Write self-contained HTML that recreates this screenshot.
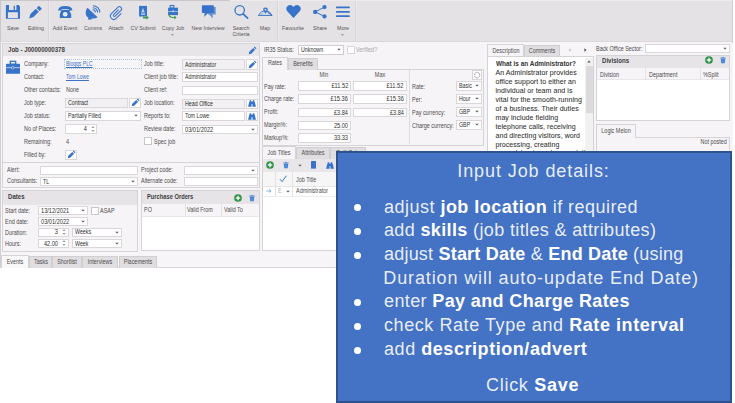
<!DOCTYPE html><html><head><meta charset="utf-8"><style>
html,body{margin:0;padding:0;width:735px;height:403px;overflow:hidden;background:#ffffff;font-family:"Liberation Sans",sans-serif;}
.a{position:absolute;}
.t{position:absolute;white-space:nowrap;line-height:10px;height:10px;}
.dd{width:0;height:0;border-left:1.6px solid transparent;border-right:1.6px solid transparent;border-top:1.6px solid #5a5a5a;}
.su{width:0;height:0;border-left:1.4px solid transparent;border-right:1.4px solid transparent;border-bottom:1.4px solid #6a6a6a;}
.sd{width:0;height:0;border-left:1.4px solid transparent;border-right:1.4px solid transparent;border-top:1.4px solid #6a6a6a;}
u{text-decoration:underline;}
.co b{color:#fff;}
</style></head><body>
<div class="a" style="left:0px;top:0px;width:733px;height:41px;background:#e4e2e5;"></div>
<div class="a" style="left:0px;top:0px;width:230px;height:1px;background:#cac8ca;"></div>
<div class="a" style="left:230px;top:0px;width:503px;height:1px;background:#eceaec;"></div>
<div class="a" style="left:0px;top:0px;width:1px;height:41px;background:#c9c7c9;"></div>
<div class="a" style="left:732px;top:0px;width:1px;height:41px;background:#cfcdcf;"></div>
<div class="a" style="left:0px;top:41px;width:733px;height:1px;background:#dad7db;"></div>
<div class="a" style="left:48px;top:1px;width:1px;height:40px;background:#d6d4d7;"></div>
<div class="a" style="left:49px;top:1px;width:1px;height:40px;background:#eceaed;"></div>
<div class="a" style="left:277px;top:1px;width:1px;height:40px;background:#d6d4d7;"></div>
<div class="a" style="left:278px;top:1px;width:1px;height:40px;background:#eceaed;"></div>
<div class="a" style="left:355px;top:1px;width:1px;height:40px;background:#d6d4d7;"></div>
<div class="a" style="left:356px;top:1px;width:1px;height:40px;background:#eceaed;"></div>
<svg class="a" style="left:0px;top:0px" width="48" height="24" viewBox="0 0 48 24"><path d="M5.9 5 H18.6 L20 6.4 V18.8 H5.9 Z M7.9 12.2 V17.9 H17.9 V12.2 Z" fill="#3773c8" fill-rule="evenodd"/><rect x="9" y="5" width="7.4" height="5" fill="#e4e2e5"/><rect x="13.6" y="5.8" width="1.3" height="4" fill="#3773c8"/><path d="M29.2 18.4 L30.5 14.1 L35.8 8.8 L38.8 11.8 L33.5 17.1 Z" fill="#3773c8"/><path d="M36.7 7.9 L38.9 5.7 L41.9 8.7 L39.7 10.9 Z" fill="#3773c8"/></svg>
<svg class="a" style="left:54px;top:2px" width="22" height="20" viewBox="0 0 22 20"><path d="M4.2 7.9 Q4.5 4 11.2 4 Q17.9 4 18.4 7.9 L18.2 8.4 L15.1 8.4 L14.7 6.9 L7.7 6.9 L7.3 8.4 L4.4 8.4 Z" fill="#3773c8"/><path d="M7.6 7.6 H14.8 L17.2 12.6 V15.9 H5.8 V12.6 Z" fill="#3773c8"/><rect x="8" y="7.3" width="6.4" height="0.6" fill="#e4e2e5"/><circle cx="11.2" cy="12.3" r="2.3" fill="#eef1f8"/><circle cx="11.2" cy="12.3" r="0.5" fill="#9db8e3"/></svg>
<svg class="a" style="left:82px;top:2px" width="22" height="20" viewBox="0 0 22 20"><path d="M5.5 5.8 L15.6 15.3 Q13 17 9.6 16.3 L10 17.6 H5.9 L6.4 15.7 Q3.6 14.2 3.7 10.5 Q3.9 7.5 5.5 5.8 Z" fill="#3773c8"/><g transform="translate(0 0.8)"><path d="M10.6 7 A2.8 2.8 0 0 1 13.4 9.8" stroke="#3773c8" stroke-width="1.1" fill="none"/><path d="M10.8 4.9 A4.8 4.8 0 0 1 15.6 9.7" stroke="#3773c8" stroke-width="1.1" fill="none"/><path d="M11 2.9 A6.8 6.8 0 0 1 17.8 9.7" stroke="#3773c8" stroke-width="1.1" fill="none"/></g></svg>
<svg class="a" style="left:106px;top:2px" width="20" height="20" viewBox="0 0 20 20"><g transform="translate(10.3 11.6) scale(0.82) rotate(45) translate(-10.5 -11.5)"><path d="M9.2 6.5 V14.6 A1.3 1.3 0 0 0 11.8 14.6 V4.8 A2.7 2.7 0 0 0 6.4 4.8 V15.8 A4.1 4.1 0 0 0 14.6 15.8 V7.5" stroke="#3773c8" stroke-width="1.25" fill="none" stroke-linecap="round"/></g></svg>
<svg class="a" style="left:132px;top:2px" width="22" height="20" viewBox="0 0 22 20"><rect x="7.1" y="3.9" width="7.9" height="10.6" fill="#3773c8"/><path d="M11 5.8 L9.3 10.2 H12.7 Z" fill="#bcd3f0"/><rect x="9" y="10.8" width="4" height="0.8" fill="#bcd3f0"/><rect x="9" y="12.2" width="4" height="0.8" fill="#bcd3f0"/><path d="M11 14.8 H14.5 V13.4 L16.8 15.6 L14.5 17.8 V16.4 H11 Z" fill="#3a9a4a"/></svg>
<svg class="a" style="left:164px;top:2px" width="18" height="20" viewBox="0 0 18 20"><rect x="6.2" y="3.5" width="3.6" height="2.6" fill="none" stroke="#3773c8" stroke-width="1.1"/><rect x="4.1" y="5.7" width="9.9" height="7.4" fill="#3773c8"/><rect x="4.1" y="9" width="9.9" height="0.7" fill="#bcd3f0"/><circle cx="9" cy="9.3" r="1" fill="#bcd3f0"/><path d="M5.3 11.5 Q5.5 14.8 9 14.9 H10.3 V13.6 L12.6 15.5 L10.3 17.4 V16.1 H9 Q4.3 16 4.2 11.5 Z" fill="#3a9a4a"/></svg>
<svg class="a" style="left:196px;top:2px" width="22" height="20" viewBox="0 0 22 20"><path d="M16 5.1 H19.7 V12.6 H16.6 L16.8 16.6 L13.2 12.6 H12 V11 H16 Z" fill="#3773c8" opacity="0.72"/><path d="M6.3 3.2 H17.4 Q17.8 3.2 17.8 3.6 V10.6 Q17.8 11 17.4 11 H12.2 L7.9 15 L8.8 11 H6.3 Q5.9 11 5.9 10.6 V3.6 Q5.9 3.2 6.3 3.2 Z" fill="#3773c8"/></svg>
<svg class="a" style="left:230px;top:2px" width="22" height="20" viewBox="0 0 22 20"><circle cx="9.7" cy="8.3" r="4.7" stroke="#3773c8" stroke-width="1.3" fill="none"/><path d="M13.1 11.8 L17.6 16.2" stroke="#3773c8" stroke-width="1.7" stroke-linecap="round"/></svg>
<svg class="a" style="left:254px;top:2px" width="22" height="20" viewBox="0 0 22 20"><path d="M4.3 13.4 L7.6 9.6 H9.8 M13.2 9.6 H15.1 L18.1 13.4 Z" stroke="#3773c8" stroke-width="0.9" fill="none" stroke-linejoin="round"/><path d="M4.3 13.4 H18.1" stroke="#3773c8" stroke-width="1"/><path d="M6.5 11.8 L9.5 11.8 M13.5 11.2 L16.5 12.2" stroke="#3773c8" stroke-width="0.6" opacity="0.6"/><path d="M11.5 12 L9.3 8.3 Q8.7 5.4 11.5 5.4 Q14.3 5.4 13.7 8.3 Z" fill="#3773c8"/><circle cx="11.5" cy="7.7" r="0.9" fill="#e4e2e5"/></svg>
<svg class="a" style="left:286px;top:5px" width="15" height="13" viewBox="0 0 15 13"><path d="M7.5 13 L1.5 6.5 Q-0.5 4 0.8 2 Q2 0 4 0 Q6.3 0 7.5 2 Q8.7 0 11 0 Q13 0 14.2 2 Q15.5 4 13.5 6.5 Z" fill="#3773c8"/></svg>
<svg class="a" style="left:306px;top:2px" width="22" height="20" viewBox="0 0 22 20"><circle cx="18.5" cy="5.1" r="2.1" fill="#3773c8"/><circle cx="9.2" cy="9.9" r="2.2" fill="#3773c8"/><circle cx="18.5" cy="14.4" r="2.1" fill="#3773c8"/><path d="M18.5 5.1 L9.2 9.9 L18.5 14.4" stroke="#3773c8" stroke-width="1" fill="none"/></svg>
<svg class="a" style="left:335px;top:2px" width="16" height="20" viewBox="0 0 16 20"><rect x="0.9" y="4.45" width="14" height="1.9" rx="0.95" fill="#3773c8"/><rect x="0.9" y="8.95" width="14" height="1.9" rx="0.95" fill="#3773c8"/><rect x="0.9" y="13.2" width="14" height="1.9" rx="0.95" fill="#3773c8"/></svg>
<div class="t" style="top:22.9px;font-size:6px;color:#545254;letter-spacing:0px;transform:scaleX(0.88);transform-origin:center center;left:-87.5px;width:200px;text-align:center;">Save</div>
<div class="t" style="top:22.9px;font-size:6px;color:#545254;letter-spacing:0px;transform:scaleX(0.88);transform-origin:center center;left:-64.5px;width:200px;text-align:center;">Editing</div>
<div class="t" style="top:22.9px;font-size:6px;color:#545254;letter-spacing:0px;transform:scaleX(0.88);transform-origin:center center;left:-35px;width:200px;text-align:center;">Add Event</div>
<div class="t" style="top:22.9px;font-size:6px;color:#545254;letter-spacing:0px;transform:scaleX(0.88);transform-origin:center center;left:-7.299999999999997px;width:200px;text-align:center;">Comms</div>
<div class="t" style="top:22.9px;font-size:6px;color:#545254;letter-spacing:0px;transform:scaleX(0.88);transform-origin:center center;left:16px;width:200px;text-align:center;">Attach</div>
<div class="t" style="top:22.9px;font-size:6px;color:#545254;letter-spacing:0px;transform:scaleX(0.88);transform-origin:center center;left:43px;width:200px;text-align:center;">CV Submit</div>
<div class="t" style="top:22.9px;font-size:6px;color:#545254;letter-spacing:0px;transform:scaleX(0.88);transform-origin:center center;left:72.69999999999999px;width:200px;text-align:center;">Copy Job</div>
<div class="t" style="top:22.9px;font-size:6px;color:#545254;letter-spacing:0px;transform:scaleX(0.88);transform-origin:center center;left:108.4px;width:200px;text-align:center;">New Interview</div>
<div class="t" style="top:22.9px;font-size:6px;color:#545254;letter-spacing:0px;transform:scaleX(0.88);transform-origin:center center;left:141px;width:200px;text-align:center;">Search</div>
<div class="t" style="top:22.9px;font-size:6px;color:#545254;letter-spacing:0px;transform:scaleX(0.88);transform-origin:center center;left:164.8px;width:200px;text-align:center;">Map</div>
<div class="t" style="top:22.9px;font-size:6px;color:#545254;letter-spacing:0px;transform:scaleX(0.88);transform-origin:center center;left:193.3px;width:200px;text-align:center;">Favourite</div>
<div class="t" style="top:22.9px;font-size:6px;color:#545254;letter-spacing:0px;transform:scaleX(0.88);transform-origin:center center;left:219.7px;width:200px;text-align:center;">Share</div>
<div class="t" style="top:22.9px;font-size:6px;color:#545254;letter-spacing:0px;transform:scaleX(0.88);transform-origin:center center;left:242.60000000000002px;width:200px;text-align:center;">More</div>
<div class="t" style="top:29.299999999999997px;font-size:6px;color:#545254;letter-spacing:0px;transform:scaleX(0.88);transform-origin:center center;left:141px;width:200px;text-align:center;">Criteria</div>
<svg class="a" style="left:171.2px;top:33.5px" width="3" height="2" viewBox="0 0 3 2"><path d="M0 0.2 H3 L1.5 1.8 Z" fill="#888"/></svg>
<svg class="a" style="left:341.1px;top:33.5px" width="3" height="2" viewBox="0 0 3 2"><path d="M0 0.2 H3 L1.5 1.8 Z" fill="#888"/></svg>
<div class="a" style="left:0px;top:42px;width:733px;height:226px;background:#f7f5f7;"></div>
<div class="a" style="left:0px;top:42px;width:1px;height:226px;background:#d0ced0;"></div>
<div class="a" style="left:732px;top:42px;width:1px;height:226px;background:#d0ced0;"></div>
<div class="a" style="left:0px;top:267px;width:733px;height:1px;background:#d8d6d8;"></div>
<div class="a" style="left:2px;top:43px;width:258px;height:120px;background:#f6f4f6;border:1px solid #d5d3d5;box-sizing:border-box;"></div>
<div class="a" style="left:3px;top:44px;width:256px;height:12px;background:#e7e5e7;"></div>
<div class="t" style="top:45px;font-size:7px;color:#3d3d3d;letter-spacing:0px;transform:scaleX(0.87);transform-origin:left center;font-weight:bold;left:8px;">Job - J00000000378</div>
<svg class="a" style="left:247.5px;top:45.5px" width="9" height="9" viewBox="0 0 16 16"><path d="M1.2 14.8 L2.3 10.4 L9.3 3.4 L12.6 6.7 L5.6 13.7 Z" fill="#3773c8"/><path d="M10.4 2.3 L11.8 0.9 L15.1 4.2 L13.7 5.6 Z" fill="#3773c8"/></svg>
<svg class="a" style="left:6px;top:60px" width="14" height="14" viewBox="0 0 14 14"><rect x="4.3" y="1.3" width="5.4" height="3" fill="none" stroke="#3773c8" stroke-width="1.3"/><rect x="0" y="3.8" width="14" height="10" rx="0.5" fill="#3773c8"/><rect x="0" y="7.3" width="14" height="0.8" fill="#cfdcf2"/><circle cx="6.7" cy="7.7" r="1.3" fill="#3773c8" stroke="#cfdcf2" stroke-width="0.7"/></svg>
<div class="t" style="top:59px;font-size:6.8px;color:#4e4c4e;letter-spacing:0px;transform:scaleX(0.8);transform-origin:left center;left:24px;">Company:</div>
<div class="t" style="top:72px;font-size:6.8px;color:#4e4c4e;letter-spacing:0px;transform:scaleX(0.8);transform-origin:left center;left:24px;">Contact:</div>
<div class="t" style="top:85px;font-size:6.8px;color:#4e4c4e;letter-spacing:0px;transform:scaleX(0.8);transform-origin:left center;left:24px;">Other contacts:</div>
<div class="t" style="top:98px;font-size:6.8px;color:#4e4c4e;letter-spacing:0px;transform:scaleX(0.8);transform-origin:left center;left:24px;">Job type:</div>
<div class="t" style="top:110.5px;font-size:6.8px;color:#4e4c4e;letter-spacing:0px;transform:scaleX(0.8);transform-origin:left center;left:24px;">Job status:</div>
<div class="t" style="top:124px;font-size:6.8px;color:#4e4c4e;letter-spacing:0px;transform:scaleX(0.8);transform-origin:left center;left:24px;">No of Places:</div>
<div class="t" style="top:137px;font-size:6.8px;color:#4e4c4e;letter-spacing:0px;transform:scaleX(0.8);transform-origin:left center;left:24px;">Remaining:</div>
<div class="t" style="top:150px;font-size:6.8px;color:#4e4c4e;letter-spacing:0px;transform:scaleX(0.8);transform-origin:left center;left:24px;">Filled by:</div>
<div class="a" style="left:64px;top:59px;width:78px;height:10px;background:#f7f6f7;border:1px dotted #a9c1e3;box-sizing:border-box;"></div>
<div class="t" style="top:59px;font-size:6.8px;color:#3f6fc4;letter-spacing:0px;transform:scaleX(0.74);transform-origin:left center;left:66px;"><u>Bloggs PLC</u></div>
<div class="t" style="top:72px;font-size:6.8px;color:#3f6fc4;letter-spacing:0px;transform:scaleX(0.74);transform-origin:left center;left:66px;"><u>Tom Lowe</u></div>
<div class="t" style="top:85px;font-size:6.8px;color:#4e4c4e;letter-spacing:0px;transform:scaleX(0.8);transform-origin:left center;left:65.5px;">None</div>
<div class="a" style="left:65px;top:98px;width:63px;height:10px;background:#f2f0f2;border:1px solid #d9d7d9;box-sizing:border-box;"></div>
<div class="t" style="top:98.4px;font-size:6.8px;color:#303030;letter-spacing:0px;transform:scaleX(0.78);transform-origin:left center;left:68px;">Contract</div>
<div class="a" style="left:129px;top:98px;width:12px;height:10px;background:#ffffff;border:1px solid #d9d7d9;box-sizing:border-box;"></div>
<svg class="a" style="left:130.5px;top:98.4px" width="9" height="9" viewBox="0 0 16 16"><path d="M1.2 14.8 L2.3 10.4 L9.3 3.4 L12.6 6.7 L5.6 13.7 Z" fill="#3773c8"/><path d="M10.4 2.3 L11.8 0.9 L15.1 4.2 L13.7 5.6 Z" fill="#3773c8"/></svg>
<div class="a" style="left:65px;top:110.5px;width:76px;height:10px;background:#ffffff;border:1px solid #d9d7d9;box-sizing:border-box;"></div>
<div class="t" style="top:110.9px;font-size:6.8px;color:#303030;letter-spacing:0px;transform:scaleX(0.78);transform-origin:left center;left:68px;">Partially Filled</div>
<svg class="a" style="left:134px;top:114.0px" width="4" height="3" viewBox="0 0 4 3"><path d="M0.3 0.8 H3.7 L2 2.6 Z" fill="#555"/></svg>
<div class="a" style="left:65px;top:124px;width:32px;height:10px;background:#ffffff;border:1px solid #d9d7d9;box-sizing:border-box;"></div>
<div class="t" style="top:124.4px;font-size:6.8px;color:#303030;letter-spacing:0px;transform:scaleX(0.83);transform-origin:right center;right:648.5px;text-align:right;">4</div>
<svg class="a" style="left:90.5px;top:125.0px" width="4" height="8" viewBox="0 0 4 8"><path d="M0.8 3 L2 1.7 L3.2 3 M0.8 5 L2 6.3 L3.2 5" stroke="#666" stroke-width="0.8" fill="none"/></svg>
<div class="t" style="top:137px;font-size:6.8px;color:#4e4c4e;letter-spacing:0px;transform:scaleX(0.8);transform-origin:left center;left:65.5px;">4</div>
<div class="a" style="left:65px;top:149.5px;width:12px;height:10px;background:#ffffff;border:1px solid #d9d7d9;box-sizing:border-box;"></div>
<svg class="a" style="left:66.5px;top:149.9px" width="9" height="9" viewBox="0 0 16 16"><path d="M1.2 14.8 L2.3 10.4 L9.3 3.4 L12.6 6.7 L5.6 13.7 Z" fill="#3773c8"/><path d="M10.4 2.3 L11.8 0.9 L15.1 4.2 L13.7 5.6 Z" fill="#3773c8"/></svg>
<div class="t" style="top:59px;font-size:6.8px;color:#4e4c4e;letter-spacing:0px;transform:scaleX(0.8);transform-origin:left center;left:144px;">Job title:</div>
<div class="t" style="top:72px;font-size:6.8px;color:#4e4c4e;letter-spacing:0px;transform:scaleX(0.8);transform-origin:left center;left:144px;">Client job title:</div>
<div class="t" style="top:85px;font-size:6.8px;color:#4e4c4e;letter-spacing:0px;transform:scaleX(0.8);transform-origin:left center;left:144px;">Client ref:</div>
<div class="t" style="top:98px;font-size:6.8px;color:#4e4c4e;letter-spacing:0px;transform:scaleX(0.8);transform-origin:left center;left:144px;">Job location:</div>
<div class="t" style="top:111px;font-size:6.8px;color:#4e4c4e;letter-spacing:0px;transform:scaleX(0.8);transform-origin:left center;left:144px;">Reports to:</div>
<div class="t" style="top:124px;font-size:6.8px;color:#4e4c4e;letter-spacing:0px;transform:scaleX(0.8);transform-origin:left center;left:144px;">Review date:</div>
<div class="a" style="left:182px;top:59px;width:63px;height:10.5px;background:#f2f0f2;border:1px solid #d9d7d9;box-sizing:border-box;"></div>
<div class="t" style="top:59.650000000000006px;font-size:6.8px;color:#303030;letter-spacing:0px;transform:scaleX(0.78);transform-origin:left center;left:185px;">Administrator</div>
<div class="a" style="left:246px;top:59px;width:12px;height:10.5px;background:#ffffff;border:1px solid #d9d7d9;box-sizing:border-box;"></div>
<svg class="a" style="left:247.5px;top:59.65px" width="9" height="9" viewBox="0 0 16 16"><path d="M1.2 14.8 L2.3 10.4 L9.3 3.4 L12.6 6.7 L5.6 13.7 Z" fill="#3773c8"/><path d="M10.4 2.3 L11.8 0.9 L15.1 4.2 L13.7 5.6 Z" fill="#3773c8"/></svg>
<div class="a" style="left:182px;top:72px;width:76px;height:10px;background:#ffffff;border:1px solid #d9d7d9;box-sizing:border-box;"></div>
<div class="t" style="top:72.4px;font-size:6.8px;color:#303030;letter-spacing:0px;transform:scaleX(0.78);transform-origin:left center;left:185px;">Administrator</div>
<div class="a" style="left:182px;top:85.5px;width:76px;height:9.5px;background:#ffffff;border:1px solid #d9d7d9;box-sizing:border-box;"></div>
<div class="a" style="left:182px;top:98.5px;width:63px;height:10px;background:#f2f0f2;border:1px solid #d9d7d9;box-sizing:border-box;"></div>
<div class="t" style="top:98.9px;font-size:6.8px;color:#303030;letter-spacing:0px;transform:scaleX(0.78);transform-origin:left center;left:185px;">Head Office</div>
<div class="a" style="left:246px;top:98.5px;width:12px;height:10px;background:#ffffff;border:1px solid #d9d7d9;box-sizing:border-box;"></div>
<svg class="a" style="left:248.0px;top:100.0px" width="8" height="7" viewBox="0 0 8 7"><path d="M1.6 0.2 H3.2 V1.6 H4.8 V0.2 H6.4 V1.8 L6.9 2.2 L7.9 6.8 H4.5 L4.4 4 H3.6 L3.5 6.8 H0.1 L1.1 2.2 L1.6 1.8 Z" fill="#3773c8"/></svg>
<div class="a" style="left:182px;top:111px;width:63px;height:10px;background:#ffffff;border:1px solid #d9d7d9;box-sizing:border-box;"></div>
<div class="t" style="top:111.4px;font-size:6.8px;color:#303030;letter-spacing:0px;transform:scaleX(0.78);transform-origin:left center;left:185px;">Tom Lowe</div>
<div class="a" style="left:246px;top:111px;width:12px;height:10px;background:#ffffff;border:1px solid #d9d7d9;box-sizing:border-box;"></div>
<svg class="a" style="left:248.0px;top:112.5px" width="8" height="7" viewBox="0 0 8 7"><path d="M1.6 0.2 H3.2 V1.6 H4.8 V0.2 H6.4 V1.8 L6.9 2.2 L7.9 6.8 H4.5 L4.4 4 H3.6 L3.5 6.8 H0.1 L1.1 2.2 L1.6 1.8 Z" fill="#3773c8"/></svg>
<div class="a" style="left:182px;top:124.5px;width:76px;height:9.5px;background:#ffffff;border:1px solid #d9d7d9;box-sizing:border-box;"></div>
<div class="t" style="top:124.65px;font-size:6.8px;color:#303030;letter-spacing:0px;transform:scaleX(0.83);transform-origin:left center;left:185px;">03/01/2022</div>
<svg class="a" style="left:251px;top:127.75px" width="4" height="3" viewBox="0 0 4 3"><path d="M0.3 0.8 H3.7 L2 2.6 Z" fill="#555"/></svg>
<div class="a" style="left:144px;top:137px;width:8px;height:8px;background:#ffffff;border:1px solid #c9c7c9;box-sizing:border-box;"></div>
<div class="t" style="top:136.5px;font-size:6.8px;color:#4e4c4e;letter-spacing:0px;transform:scaleX(0.8);transform-origin:left center;left:154px;">Spec job</div>
<div class="a" style="left:2px;top:162px;width:258px;height:26px;background:#f6f4f6;border:1px solid #d5d3d5;box-sizing:border-box;"></div>
<div class="t" style="top:165px;font-size:6.8px;color:#4e4c4e;letter-spacing:0px;transform:scaleX(0.8);transform-origin:left center;left:6.5px;">Alert:</div>
<div class="t" style="top:176px;font-size:6.8px;color:#4e4c4e;letter-spacing:0px;transform:scaleX(0.8);transform-origin:left center;left:6.5px;">Consultants:</div>
<div class="a" style="left:40px;top:165.5px;width:98px;height:9.5px;background:#ffffff;border:1px solid #d9d7d9;box-sizing:border-box;"></div>
<div class="a" style="left:40px;top:176.5px;width:98px;height:9.5px;background:#ffffff;border:1px solid #d9d7d9;box-sizing:border-box;"></div>
<div class="t" style="top:176.65px;font-size:6.8px;color:#303030;letter-spacing:0px;transform:scaleX(0.78);transform-origin:left center;left:43px;">TL</div>
<svg class="a" style="left:131px;top:179.75px" width="4" height="3" viewBox="0 0 4 3"><path d="M0.3 0.8 H3.7 L2 2.6 Z" fill="#555"/></svg>
<div class="t" style="top:165px;font-size:6.8px;color:#4e4c4e;letter-spacing:0px;transform:scaleX(0.8);transform-origin:left center;left:140.5px;">Project code:</div>
<div class="t" style="top:176px;font-size:6.8px;color:#4e4c4e;letter-spacing:0px;transform:scaleX(0.8);transform-origin:left center;left:140.5px;">Alternate code:</div>
<div class="a" style="left:184px;top:165.5px;width:73.5px;height:9.5px;background:#ffffff;border:1px solid #d9d7d9;box-sizing:border-box;"></div>
<svg class="a" style="left:250.5px;top:168.75px" width="4" height="3" viewBox="0 0 4 3"><path d="M0.3 0.8 H3.7 L2 2.6 Z" fill="#555"/></svg>
<div class="a" style="left:184px;top:176.5px;width:73.5px;height:9.5px;background:#ffffff;border:1px solid #d9d7d9;box-sizing:border-box;"></div>
<div class="a" style="left:2px;top:190px;width:136px;height:62px;background:#f6f4f6;border:1px solid #d5d3d5;box-sizing:border-box;"></div>
<div class="a" style="left:3px;top:191px;width:134px;height:13.5px;background:#e6e4e6;"></div>
<div class="t" style="top:192.3px;font-size:7px;color:#3d3d3d;letter-spacing:0px;transform:scaleX(0.87);transform-origin:left center;font-weight:bold;left:7.5px;">Dates</div>
<div class="t" style="top:205.5px;font-size:6.8px;color:#4e4c4e;letter-spacing:0px;transform:scaleX(0.8);transform-origin:left center;left:4.5px;">Start date:</div>
<div class="t" style="top:216.5px;font-size:6.8px;color:#4e4c4e;letter-spacing:0px;transform:scaleX(0.8);transform-origin:left center;left:4.5px;">End date:</div>
<div class="t" style="top:227.8px;font-size:6.8px;color:#4e4c4e;letter-spacing:0px;transform:scaleX(0.8);transform-origin:left center;left:4.5px;">Duration:</div>
<div class="t" style="top:238.8px;font-size:6.8px;color:#4e4c4e;letter-spacing:0px;transform:scaleX(0.8);transform-origin:left center;left:4.5px;">Hours:</div>
<div class="a" style="left:38px;top:206px;width:49.8px;height:9px;background:#ffffff;border:1px solid #d9d7d9;box-sizing:border-box;"></div>
<div class="t" style="top:205.9px;font-size:6.8px;color:#303030;letter-spacing:0px;transform:scaleX(0.83);transform-origin:left center;left:41px;">13/12/2021</div>
<svg class="a" style="left:80.8px;top:209.0px" width="4" height="3" viewBox="0 0 4 3"><path d="M0.3 0.8 H3.7 L2 2.6 Z" fill="#555"/></svg>
<div class="a" style="left:91px;top:206.5px;width:8px;height:8px;background:#ffffff;border:1px solid #c9c7c9;box-sizing:border-box;"></div>
<div class="t" style="top:205.5px;font-size:6.8px;color:#4e4c4e;letter-spacing:0px;transform:scaleX(0.8);transform-origin:left center;left:100px;">ASAP</div>
<div class="a" style="left:38px;top:217px;width:49.8px;height:9px;background:#ffffff;border:1px solid #d9d7d9;box-sizing:border-box;"></div>
<div class="t" style="top:216.9px;font-size:6.8px;color:#303030;letter-spacing:0px;transform:scaleX(0.83);transform-origin:left center;left:41px;">03/01/2022</div>
<svg class="a" style="left:80.8px;top:220.0px" width="4" height="3" viewBox="0 0 4 3"><path d="M0.3 0.8 H3.7 L2 2.6 Z" fill="#555"/></svg>
<div class="a" style="left:38px;top:227.5px;width:30.5px;height:9px;background:#ffffff;border:1px solid #d9d7d9;box-sizing:border-box;"></div>
<div class="t" style="top:227.4px;font-size:6.8px;color:#303030;letter-spacing:0px;transform:scaleX(0.83);transform-origin:right center;right:677.0px;text-align:right;">3</div>
<svg class="a" style="left:62.0px;top:228.0px" width="4" height="8" viewBox="0 0 4 8"><path d="M0.8 3 L2 1.7 L3.2 3 M0.8 5 L2 6.3 L3.2 5" stroke="#666" stroke-width="0.8" fill="none"/></svg>
<div class="a" style="left:72px;top:227.5px;width:49.5px;height:9px;background:#ffffff;border:1px solid #d9d7d9;box-sizing:border-box;"></div>
<div class="t" style="top:227.4px;font-size:6.8px;color:#303030;letter-spacing:0px;transform:scaleX(0.78);transform-origin:left center;left:75px;">Weeks</div>
<svg class="a" style="left:114.5px;top:230.5px" width="4" height="3" viewBox="0 0 4 3"><path d="M0.3 0.8 H3.7 L2 2.6 Z" fill="#555"/></svg>
<div class="a" style="left:38px;top:238.5px;width:30.5px;height:9.5px;background:#ffffff;border:1px solid #d9d7d9;box-sizing:border-box;"></div>
<div class="t" style="top:238.65px;font-size:6.8px;color:#303030;letter-spacing:0px;transform:scaleX(0.83);transform-origin:right center;right:677.0px;text-align:right;">42.00</div>
<svg class="a" style="left:62.0px;top:239.25px" width="4" height="8" viewBox="0 0 4 8"><path d="M0.8 3 L2 1.7 L3.2 3 M0.8 5 L2 6.3 L3.2 5" stroke="#666" stroke-width="0.8" fill="none"/></svg>
<div class="a" style="left:72px;top:238.5px;width:49.5px;height:9.5px;background:#ffffff;border:1px solid #d9d7d9;box-sizing:border-box;"></div>
<div class="t" style="top:238.65px;font-size:6.8px;color:#303030;letter-spacing:0px;transform:scaleX(0.78);transform-origin:left center;left:75px;">Week</div>
<svg class="a" style="left:114.5px;top:241.75px" width="4" height="3" viewBox="0 0 4 3"><path d="M0.3 0.8 H3.7 L2 2.6 Z" fill="#555"/></svg>
<div class="a" style="left:141px;top:190px;width:119px;height:61px;background:#ffffff;border:1px solid #d5d3d5;box-sizing:border-box;"></div>
<div class="a" style="left:142px;top:191px;width:117px;height:13.5px;background:#e6e4e6;"></div>
<div class="t" style="top:192.3px;font-size:7px;color:#3d3d3d;letter-spacing:0px;transform:scaleX(0.82);transform-origin:left center;font-weight:bold;left:146.8px;">Purchase Orders</div>
<div class="a" style="left:142px;top:204px;width:117px;height:12px;background:#f6f4f6;"></div>
<div class="a" style="left:142px;top:215.5px;width:117px;height:1px;background:#e8e6e8;"></div>
<div class="a" style="left:184.5px;top:204px;width:1px;height:12px;background:#e3e1e3;"></div>
<div class="a" style="left:221px;top:204px;width:1px;height:12px;background:#e3e1e3;"></div>
<div class="t" style="top:205px;font-size:6.8px;color:#4e4c4e;letter-spacing:0px;transform:scaleX(0.8);transform-origin:left center;left:144.3px;">PO</div>
<div class="t" style="top:205px;font-size:6.8px;color:#4e4c4e;letter-spacing:0px;transform:scaleX(0.8);transform-origin:left center;left:187px;">Valid From</div>
<div class="t" style="top:205px;font-size:6.8px;color:#4e4c4e;letter-spacing:0px;transform:scaleX(0.8);transform-origin:left center;left:224px;">Valid To</div>
<svg class="a" style="left:234.2px;top:193.5px" width="8" height="8" viewBox="0 0 10 10"><circle cx="5" cy="5" r="4.8" fill="#2f9147"/><rect x="2.2" y="4.2" width="5.6" height="1.6" fill="#fff"/><rect x="4.2" y="2.2" width="1.6" height="5.6" fill="#fff"/></svg>
<svg class="a" style="left:248.0px;top:193.5px" width="8" height="8" viewBox="0 0 10 10"><rect x="1.6" y="2" width="6.8" height="1.1" fill="#3f7fd6"/><rect x="3.9" y="1.1" width="2.2" height="1" fill="#3f7fd6"/><path d="M2.2 3.5 H7.8 L7.2 9.2 H2.8 Z" fill="#3f7fd6"/><path d="M4.1 4.4 V8.4 M5.9 4.4 V8.4" stroke="#8fb4e6" stroke-width="0.45"/></svg>
<div class="a" style="left:1px;top:255px;width:27.6px;height:13px;background:#f9f8f9;border:1px solid #d5d3d5;border-bottom:none;box-sizing:border-box;"></div>
<div class="t" style="top:256.7px;font-size:6.8px;color:#4e4c4e;letter-spacing:0px;transform:scaleX(0.8);transform-origin:center center;left:-85.2px;width:200px;text-align:center;">Events</div>
<div class="a" style="left:28.6px;top:256px;width:23.799999999999997px;height:12px;background:#e0dee0;border:1px solid #d0ced0;border-bottom:none;box-sizing:border-box;"></div>
<div class="t" style="top:256.7px;font-size:6.8px;color:#4e4c4e;letter-spacing:0px;transform:scaleX(0.8);transform-origin:center center;left:-59.5px;width:200px;text-align:center;">Tasks</div>
<div class="a" style="left:52.4px;top:256px;width:29.9px;height:12px;background:#e0dee0;border:1px solid #d0ced0;border-bottom:none;box-sizing:border-box;"></div>
<div class="t" style="top:256.7px;font-size:6.8px;color:#4e4c4e;letter-spacing:0px;transform:scaleX(0.8);transform-origin:center center;left:-32.650000000000006px;width:200px;text-align:center;">Shortlist</div>
<div class="a" style="left:82.3px;top:256px;width:36.2px;height:12px;background:#e0dee0;border:1px solid #d0ced0;border-bottom:none;box-sizing:border-box;"></div>
<div class="t" style="top:256.7px;font-size:6.8px;color:#4e4c4e;letter-spacing:0px;transform:scaleX(0.8);transform-origin:center center;left:0.4000000000000057px;width:200px;text-align:center;">Interviews</div>
<div class="a" style="left:118.5px;top:256px;width:38.19999999999999px;height:12px;background:#e0dee0;border:1px solid #d0ced0;border-bottom:none;box-sizing:border-box;"></div>
<div class="t" style="top:256.7px;font-size:6.8px;color:#4e4c4e;letter-spacing:0px;transform:scaleX(0.8);transform-origin:center center;left:37.599999999999994px;width:200px;text-align:center;">Placements</div>
<div class="a" style="left:260px;top:43px;width:227px;height:208px;background:#f6f4f6;"></div>
<div class="t" style="top:44.7px;font-size:6.8px;color:#4e4c4e;letter-spacing:0px;transform:scaleX(0.8);transform-origin:left center;left:263.5px;">IR35 Status:</div>
<div class="a" style="left:297.5px;top:44.5px;width:46.5px;height:10px;background:#ffffff;border:1px solid #cfcdcf;box-sizing:border-box;"></div>
<div class="t" style="top:44.9px;font-size:6.8px;color:#303030;letter-spacing:0px;transform:scaleX(0.78);transform-origin:left center;left:300.5px;">Unknown</div>
<svg class="a" style="left:337.0px;top:48.0px" width="4" height="3" viewBox="0 0 4 3"><path d="M0.3 0.8 H3.7 L2 2.6 Z" fill="#555"/></svg>
<div class="a" style="left:346.5px;top:45.5px;width:8.5px;height:8.5px;background:#ffffff;border:1px solid #d8d6d8;box-sizing:border-box;"></div>
<div class="t" style="top:45px;font-size:6.8px;color:#a8a6a8;letter-spacing:0px;transform:scaleX(0.8);transform-origin:left center;left:356px;">Verified?</div>
<div class="a" style="left:262px;top:69px;width:222px;height:77px;background:#f6f4f6;border:1px solid #d5d3d5;box-sizing:border-box;"></div>
<div class="a" style="left:262px;top:56.5px;width:25.5px;height:13px;background:#f6f4f6;border:1px solid #d5d3d5;border-bottom:none;box-sizing:border-box;"></div>
<div class="a" style="left:287.5px;top:57.5px;width:30.5px;height:12px;background:#e0dee0;border:1px solid #d0ced0;border-bottom:none;box-sizing:border-box;"></div>
<div class="a" style="left:263px;top:69px;width:24px;height:1px;background:#f6f4f6;"></div>
<div class="t" style="top:58px;font-size:6.8px;color:#4e4c4e;letter-spacing:0px;transform:scaleX(0.8);transform-origin:center center;left:174.7px;width:200px;text-align:center;">Rates</div>
<div class="t" style="top:58.5px;font-size:6.8px;color:#4e4c4e;letter-spacing:0px;transform:scaleX(0.8);transform-origin:center center;left:202.7px;width:200px;text-align:center;">Benefits</div>
<div class="a" style="left:408.5px;top:70px;width:1px;height:74px;background:#dcdadc;"></div>
<div class="t" style="top:69.7px;font-size:6.8px;color:#4e4c4e;letter-spacing:0px;transform:scaleX(0.8);transform-origin:center center;left:223.60000000000002px;width:200px;text-align:center;">Min</div>
<div class="t" style="top:69.7px;font-size:6.8px;color:#4e4c4e;letter-spacing:0px;transform:scaleX(0.8);transform-origin:center center;left:279.8px;width:200px;text-align:center;">Max</div>
<div class="t" style="top:81.6px;font-size:6.8px;color:#4e4c4e;letter-spacing:0px;transform:scaleX(0.8);transform-origin:left center;left:263.8px;">Pay rate:</div>
<div class="t" style="top:94.4px;font-size:6.8px;color:#4e4c4e;letter-spacing:0px;transform:scaleX(0.8);transform-origin:left center;left:263.8px;">Charge rate:</div>
<div class="t" style="top:107.4px;font-size:6.8px;color:#4e4c4e;letter-spacing:0px;transform:scaleX(0.8);transform-origin:left center;left:263.8px;">Profit:</div>
<div class="t" style="top:120.4px;font-size:6.8px;color:#4e4c4e;letter-spacing:0px;transform:scaleX(0.8);transform-origin:left center;left:263.8px;">Margin%:</div>
<div class="t" style="top:133.4px;font-size:6.8px;color:#4e4c4e;letter-spacing:0px;transform:scaleX(0.8);transform-origin:left center;left:263.8px;">Markup%:</div>
<div class="a" style="left:298px;top:81px;width:53px;height:9.5px;background:#ffffff;border:1px solid #d9d7d9;box-sizing:border-box;"></div>
<div class="t" style="top:81.15px;font-size:6.8px;color:#303030;letter-spacing:0px;transform:scaleX(0.83);transform-origin:right center;right:387px;text-align:right;">£11.52</div>
<div class="a" style="left:353.3px;top:81px;width:53.4px;height:9.5px;background:#ffffff;border:1px solid #d9d7d9;box-sizing:border-box;"></div>
<div class="t" style="top:81.15px;font-size:6.8px;color:#303030;letter-spacing:0px;transform:scaleX(0.83);transform-origin:right center;right:331.3px;text-align:right;">£11.52</div>
<div class="a" style="left:298px;top:94.3px;width:53px;height:9.5px;background:#ffffff;border:1px solid #d9d7d9;box-sizing:border-box;"></div>
<div class="t" style="top:94.45px;font-size:6.8px;color:#303030;letter-spacing:0px;transform:scaleX(0.83);transform-origin:right center;right:387px;text-align:right;">£15.36</div>
<div class="a" style="left:353.3px;top:94.3px;width:53.4px;height:9.5px;background:#ffffff;border:1px solid #d9d7d9;box-sizing:border-box;"></div>
<div class="t" style="top:94.45px;font-size:6.8px;color:#303030;letter-spacing:0px;transform:scaleX(0.83);transform-origin:right center;right:331.3px;text-align:right;">£15.36</div>
<div class="a" style="left:298px;top:107.5px;width:53px;height:9.5px;background:#ffffff;border:1px solid #d9d7d9;box-sizing:border-box;"></div>
<div class="t" style="top:107.65px;font-size:6.8px;color:#303030;letter-spacing:0px;transform:scaleX(0.83);transform-origin:right center;right:387px;text-align:right;">£3.84</div>
<div class="a" style="left:353.3px;top:107.5px;width:53.4px;height:9.5px;background:#ffffff;border:1px solid #d9d7d9;box-sizing:border-box;"></div>
<div class="t" style="top:107.65px;font-size:6.8px;color:#303030;letter-spacing:0px;transform:scaleX(0.83);transform-origin:right center;right:331.3px;text-align:right;">£3.84</div>
<div class="a" style="left:298px;top:120.5px;width:53px;height:9.5px;background:#ffffff;border:1px solid #d9d7d9;box-sizing:border-box;"></div>
<div class="t" style="top:120.65px;font-size:6.8px;color:#303030;letter-spacing:0px;transform:scaleX(0.83);transform-origin:right center;right:387px;text-align:right;">25.00</div>
<div class="a" style="left:298px;top:133.3px;width:53px;height:9.5px;background:#ffffff;border:1px solid #d9d7d9;box-sizing:border-box;"></div>
<div class="t" style="top:133.45000000000002px;font-size:6.8px;color:#303030;letter-spacing:0px;transform:scaleX(0.83);transform-origin:right center;right:387px;text-align:right;">33.33</div>
<div class="a" style="left:472px;top:69.5px;width:10px;height:10.3px;background:#ffffff;border:1px solid #d6d4d6;box-sizing:border-box;"></div>
<svg class="a" style="left:472px;top:69.5px" width="10" height="10.3" viewBox="0 0 10 10.3"><path d="M2.6 3.6 A2.8 2.8 0 1 1 2.4 6.2" stroke="#a8a6a8" stroke-width="0.9" fill="none"/><path d="M1.6 5 L3.2 3.4 L3.4 5.4 Z" fill="#a8a6a8"/></svg>
<div class="t" style="top:82px;font-size:6.8px;color:#4e4c4e;letter-spacing:0px;transform:scaleX(0.8);transform-origin:left center;left:411.6px;">Rate:</div>
<div class="a" style="left:456px;top:81px;width:25.8px;height:9.5px;background:#ffffff;border:1px solid #d9d7d9;box-sizing:border-box;"></div>
<div class="t" style="top:81.15px;font-size:6.8px;color:#303030;letter-spacing:0px;transform:scaleX(0.78);transform-origin:left center;left:459px;">Basic</div>
<svg class="a" style="left:474.8px;top:84.25px" width="4" height="3" viewBox="0 0 4 3"><path d="M0.3 0.8 H3.7 L2 2.6 Z" fill="#555"/></svg>
<div class="t" style="top:95px;font-size:6.8px;color:#4e4c4e;letter-spacing:0px;transform:scaleX(0.8);transform-origin:left center;left:411.6px;">Per:</div>
<div class="a" style="left:456px;top:94px;width:25.8px;height:9.5px;background:#ffffff;border:1px solid #d9d7d9;box-sizing:border-box;"></div>
<div class="t" style="top:94.15px;font-size:6.8px;color:#303030;letter-spacing:0px;transform:scaleX(0.78);transform-origin:left center;left:459px;">Hour</div>
<svg class="a" style="left:474.8px;top:97.25px" width="4" height="3" viewBox="0 0 4 3"><path d="M0.3 0.8 H3.7 L2 2.6 Z" fill="#555"/></svg>
<div class="t" style="top:108px;font-size:6.8px;color:#4e4c4e;letter-spacing:0px;transform:scaleX(0.8);transform-origin:left center;left:411.6px;">Pay currency:</div>
<div class="a" style="left:456px;top:107px;width:25.8px;height:9.5px;background:#ffffff;border:1px solid #d9d7d9;box-sizing:border-box;"></div>
<div class="t" style="top:107.15px;font-size:6.8px;color:#303030;letter-spacing:0px;transform:scaleX(0.78);transform-origin:left center;left:459px;">GBP</div>
<svg class="a" style="left:474.8px;top:110.25px" width="4" height="3" viewBox="0 0 4 3"><path d="M0.3 0.8 H3.7 L2 2.6 Z" fill="#555"/></svg>
<div class="t" style="top:121px;font-size:6.8px;color:#4e4c4e;letter-spacing:0px;transform:scaleX(0.8);transform-origin:left center;left:411.6px;">Charge currency:</div>
<div class="a" style="left:456px;top:120px;width:25.8px;height:9.5px;background:#ffffff;border:1px solid #d9d7d9;box-sizing:border-box;"></div>
<div class="t" style="top:120.15px;font-size:6.8px;color:#303030;letter-spacing:0px;transform:scaleX(0.78);transform-origin:left center;left:459px;">GBP</div>
<svg class="a" style="left:474.8px;top:123.25px" width="4" height="3" viewBox="0 0 4 3"><path d="M0.3 0.8 H3.7 L2 2.6 Z" fill="#555"/></svg>
<div class="a" style="left:262px;top:158.5px;width:224.5px;height:92px;background:#ffffff;border:1px solid #d5d3d5;box-sizing:border-box;"></div>
<div class="a" style="left:262px;top:146px;width:34px;height:13px;background:#f6f4f6;border:1px solid #d5d3d5;border-bottom:none;box-sizing:border-box;"></div>
<div class="a" style="left:296px;top:147px;width:34.3px;height:12px;background:#e0dee0;border:1px solid #d0ced0;border-bottom:none;box-sizing:border-box;"></div>
<div class="a" style="left:330.3px;top:147px;width:36px;height:12px;background:#e0dee0;border:1px solid #d0ced0;border-bottom:none;box-sizing:border-box;"></div>
<div class="t" style="top:147.5px;font-size:6.8px;color:#4e4c4e;letter-spacing:0px;transform:scaleX(0.8);transform-origin:center center;left:179.3px;width:200px;text-align:center;">Job Titles</div>
<div class="t" style="top:148px;font-size:6.8px;color:#4e4c4e;letter-spacing:0px;transform:scaleX(0.8);transform-origin:center center;left:213px;width:200px;text-align:center;">Attributes</div>
<div class="t" style="top:148px;font-size:6.8px;color:#4e4c4e;letter-spacing:0px;transform:scaleX(0.8);transform-origin:center center;left:248px;width:200px;text-align:center;">Built Sets</div>
<div class="a" style="left:263px;top:159px;width:222.5px;height:13.5px;background:#e8e6e8;"></div>
<svg class="a" style="left:266.3px;top:161.3px" width="8" height="8" viewBox="0 0 10 10"><circle cx="5" cy="5" r="4.8" fill="#2f9147"/><rect x="2.2" y="4.2" width="5.6" height="1.6" fill="#fff"/><rect x="4.2" y="2.2" width="1.6" height="5.6" fill="#fff"/></svg>
<svg class="a" style="left:282.3px;top:161.3px" width="8" height="8" viewBox="0 0 10 10"><rect x="1.6" y="2" width="6.8" height="1.1" fill="#3f7fd6"/><rect x="3.9" y="1.1" width="2.2" height="1" fill="#3f7fd6"/><path d="M2.2 3.5 H7.8 L7.2 9.2 H2.8 Z" fill="#3f7fd6"/><path d="M4.1 4.4 V8.4 M5.9 4.4 V8.4" stroke="#8fb4e6" stroke-width="0.45"/></svg>
<svg class="a" style="left:297.7px;top:163.8px" width="4" height="3" viewBox="0 0 4 3"><path d="M0.3 0.8 H3.7 L2 2.6 Z" fill="#555"/></svg>
<svg class="a" style="left:311px;top:161px" width="5" height="8" viewBox="0 0 5 8"><rect x="0" y="0" width="5" height="7" rx="0.5" fill="#3773c8"/><rect x="0" y="7" width="5" height="1" fill="#7aa5df"/></svg>
<svg class="a" style="left:325.5px;top:161.8px" width="8" height="7" viewBox="0 0 8 7"><path d="M1.6 0.2 H3.2 V1.6 H4.8 V0.2 H6.4 V1.8 L6.9 2.2 L7.9 6.8 H4.5 L4.4 4 H3.6 L3.5 6.8 H0.1 L1.1 2.2 L1.6 1.8 Z" fill="#3773c8"/></svg>
<div class="a" style="left:263px;top:172px;width:222.5px;height:14px;background:#f7f6f7;"></div>
<div class="a" style="left:263px;top:186px;width:222.5px;height:1px;background:#e6e4e6;"></div>
<div class="a" style="left:275px;top:172px;width:1px;height:25px;background:#e3e1e3;"></div>
<div class="a" style="left:292px;top:172px;width:1px;height:25px;background:#e3e1e3;"></div>
<div class="a" style="left:263px;top:196.3px;width:222.5px;height:1px;background:#ececec;"></div>
<svg class="a" style="left:278.5px;top:175px" width="8" height="7.5" viewBox="0 0 10 10"><path d="M0.8 5.5 L3.8 8.8 L9.5 1" stroke="#3773c8" stroke-width="1.3" fill="none"/></svg>
<div class="t" style="top:175.1px;font-size:6.8px;color:#4e4c4e;letter-spacing:0px;transform:scaleX(0.8);transform-origin:left center;left:296px;">Job Title</div>
<svg class="a" style="left:266px;top:189px" width="5.5" height="4" viewBox="0 0 5.5 4"><path d="M0.2 2 H5 M3.2 0.4 L5 2 L3.2 3.6" stroke="#5b95dc" stroke-width="0.7" fill="none"/></svg>
<div class="t" style="top:186.3px;font-size:6.8px;color:#b0aeb0;letter-spacing:0px;transform:scaleX(0.8);transform-origin:left center;left:278.3px;">E</div>
<svg class="a" style="left:285.8px;top:189.7px" width="4" height="3" viewBox="0 0 4 3"><path d="M0.3 0.8 H3.7 L2 2.6 Z" fill="#555"/></svg>
<div class="t" style="top:186px;font-size:6.8px;color:#4e4c4e;letter-spacing:0px;transform:scaleX(0.8);transform-origin:left center;left:296px;">Administrator</div>
<div class="a" style="left:487px;top:43.5px;width:37.4px;height:13.5px;background:#f6f4f6;border:1px solid #d5d3d5;border-bottom:none;box-sizing:border-box;"></div>
<div class="a" style="left:524.4px;top:44.5px;width:35.6px;height:11.5px;background:#e0dee0;border:1px solid #d0ced0;border-bottom:none;box-sizing:border-box;"></div>
<div class="t" style="top:46px;font-size:6.8px;color:#4e4c4e;letter-spacing:0px;transform:scaleX(0.8);transform-origin:center center;left:405.8px;width:200px;text-align:center;">Description</div>
<div class="t" style="top:46.3px;font-size:6.8px;color:#4e4c4e;letter-spacing:0px;transform:scaleX(0.8);transform-origin:center center;left:442.20000000000005px;width:200px;text-align:center;">Comments</div>
<svg class="a" style="left:567.5px;top:48px" width="3" height="4" viewBox="0 0 3 4"><path d="M2.6 0.3 V3.7 L0.4 2 Z" fill="#c6c4c6"/></svg>
<svg class="a" style="left:584.3px;top:48px" width="3" height="4" viewBox="0 0 3 4"><path d="M0.4 0.3 V3.7 L2.6 2 Z" fill="#505050"/></svg>
<div class="a" style="left:487px;top:56px;width:107px;height:212px;background:#ffffff;border:1px solid #d5d3d5;box-sizing:border-box;"></div>
<div class="a" style="left:585.3px;top:57.8px;width:7.5px;height:209px;background:#f2f1f2;"></div>
<div class="a" style="left:586px;top:66px;width:6.5px;height:47px;background:#dcdadc;"></div>
<svg class="a" style="left:587px;top:60px" width="4" height="3" viewBox="0 0 4 3"><path d="M0.3 2.6 H3.7 L2 0.4 Z" fill="#555"/></svg>
<div class="t" style="top:59.400000000000006px;font-size:7px;color:#333333;letter-spacing:0px;transform:scaleX(0.92);transform-origin:left center;left:495.5px;"><b>What is an Administrator?</b></div>
<div class="t" style="top:68.30000000000001px;font-size:7px;color:#333333;letter-spacing:0.06px;left:495.5px;-webkit-text-stroke:0.07px #333;">An Administrator provides</div>
<div class="t" style="top:77.2px;font-size:7px;color:#333333;letter-spacing:0.06px;left:495.5px;-webkit-text-stroke:0.07px #333;">office support to either an</div>
<div class="t" style="top:86.10000000000001px;font-size:7px;color:#333333;letter-spacing:0.06px;left:495.5px;-webkit-text-stroke:0.07px #333;">individual or team and is</div>
<div class="t" style="top:95.0px;font-size:7px;color:#333333;letter-spacing:0.06px;left:495.5px;-webkit-text-stroke:0.07px #333;">vital for the smooth-running</div>
<div class="t" style="top:103.9px;font-size:7px;color:#333333;letter-spacing:0.06px;left:495.5px;-webkit-text-stroke:0.07px #333;">of a business. Their duties</div>
<div class="t" style="top:112.80000000000001px;font-size:7px;color:#333333;letter-spacing:0.06px;left:495.5px;-webkit-text-stroke:0.07px #333;">may include fielding</div>
<div class="t" style="top:121.70000000000002px;font-size:7px;color:#333333;letter-spacing:0.06px;left:495.5px;-webkit-text-stroke:0.07px #333;">telephone calls, receiving</div>
<div class="t" style="top:130.60000000000002px;font-size:7px;color:#333333;letter-spacing:0.06px;left:495.5px;-webkit-text-stroke:0.07px #333;">and directing visitors, word</div>
<div class="t" style="top:139.5px;font-size:7px;color:#333333;letter-spacing:0.06px;left:495.5px;-webkit-text-stroke:0.07px #333;">processing, creating</div>
<div class="t" style="top:148.4px;font-size:7px;color:#333333;letter-spacing:0.06px;left:495.5px;-webkit-text-stroke:0.07px #333;">spreadsheets and presentations</div>
<div class="a" style="left:594px;top:43px;width:139px;height:225px;background:#f6f4f6;"></div>
<div class="t" style="top:43.6px;font-size:6.8px;color:#4e4c4e;letter-spacing:0px;transform:scaleX(0.8);transform-origin:left center;left:596px;">Back Office Sector:</div>
<div class="a" style="left:645.2px;top:43.5px;width:85.2px;height:9.3px;background:#ffffff;border:1px solid #d9d7d9;box-sizing:border-box;"></div>
<svg class="a" style="left:723.4000000000001px;top:46.65px" width="4" height="3" viewBox="0 0 4 3"><path d="M0.3 0.8 H3.7 L2 2.6 Z" fill="#555"/></svg>
<div class="a" style="left:596.3px;top:54.8px;width:134px;height:66.5px;background:#ffffff;border:1px solid #d5d3d5;box-sizing:border-box;"></div>
<div class="a" style="left:597.3px;top:55.8px;width:132px;height:12px;background:#e6e4e6;"></div>
<div class="t" style="top:56px;font-size:7px;color:#3d3d3d;letter-spacing:0px;transform:scaleX(0.87);transform-origin:left center;font-weight:bold;left:602.2px;">Divisions</div>
<svg class="a" style="left:705px;top:56.3px" width="8" height="8" viewBox="0 0 10 10"><circle cx="5" cy="5" r="4.8" fill="#2f9147"/><rect x="2.2" y="4.2" width="5.6" height="1.6" fill="#fff"/><rect x="4.2" y="2.2" width="1.6" height="5.6" fill="#fff"/></svg>
<svg class="a" style="left:718.7px;top:56.3px" width="8" height="8" viewBox="0 0 10 10"><rect x="1.6" y="2" width="6.8" height="1.1" fill="#3f7fd6"/><rect x="3.9" y="1.1" width="2.2" height="1" fill="#3f7fd6"/><path d="M2.2 3.5 H7.8 L7.2 9.2 H2.8 Z" fill="#3f7fd6"/><path d="M4.1 4.4 V8.4 M5.9 4.4 V8.4" stroke="#8fb4e6" stroke-width="0.45"/></svg>
<div class="a" style="left:597.3px;top:67.8px;width:132px;height:12px;background:#f6f4f6;"></div>
<div class="a" style="left:597.3px;top:79.3px;width:132px;height:1px;background:#e8e6e8;"></div>
<div class="a" style="left:645.2px;top:67.8px;width:1px;height:12px;background:#e3e1e3;"></div>
<div class="a" style="left:699.5px;top:67.8px;width:1px;height:12px;background:#e3e1e3;"></div>
<div class="t" style="top:69.6px;font-size:6.8px;color:#4e4c4e;letter-spacing:0px;transform:scaleX(0.8);transform-origin:left center;left:600px;">Division</div>
<div class="t" style="top:69.6px;font-size:6.8px;color:#4e4c4e;letter-spacing:0px;transform:scaleX(0.8);transform-origin:left center;left:648.8px;">Department</div>
<div class="t" style="top:69.6px;font-size:6.8px;color:#4e4c4e;letter-spacing:0px;transform:scaleX(0.8);transform-origin:left center;left:702.8px;">%Split</div>
<div class="a" style="left:596.3px;top:136.8px;width:134px;height:20px;background:#f6f4f6;border:1px solid #d5d3d5;box-sizing:border-box;"></div>
<div class="a" style="left:596.3px;top:124.2px;width:39.5px;height:13px;background:#f6f4f6;border:1px solid #d5d3d5;border-bottom:none;box-sizing:border-box;"></div>
<div class="a" style="left:597.3px;top:136.5px;width:37.5px;height:1.5px;background:#f6f4f6;"></div>
<div class="t" style="top:125.80000000000001px;font-size:6.8px;color:#4e4c4e;letter-spacing:0px;transform:scaleX(0.8);transform-origin:center center;left:516px;width:200px;text-align:center;">Logic Melon</div>
<div class="t" style="top:136.7px;font-size:6.8px;color:#4e4c4e;letter-spacing:0px;transform:scaleX(0.8);transform-origin:right center;right:8px;text-align:right;">Not posted</div>
<div class="a" style="left:336px;top:151px;width:396px;height:252px;background:#4472c4;border:2px solid #2f528f;box-sizing:border-box;"></div>
<div class="t co" style="top:158.6px;color:rgba(255,255,255,0.9);font-size:18px;letter-spacing:0px;line-height:24px;height:24px;letter-spacing:0.91px;left:333.5px;width:400px;text-align:center;">Input Job details:</div>
<div class="a" style="left:354.2px;top:203.9px;width:7px;height:7px;border-radius:50%;background:#fff"></div>
<div class="t co" style="top:195px;color:rgba(255,255,255,0.9);font-size:18px;letter-spacing:0px;line-height:24px;height:24px;letter-spacing:0.48px;left:384px;">adjust <b>job location</b> if required</div>
<div class="a" style="left:354.2px;top:227.5px;width:7px;height:7px;border-radius:50%;background:#fff"></div>
<div class="t co" style="top:218.3px;color:rgba(255,255,255,0.9);font-size:18px;letter-spacing:0px;line-height:24px;height:24px;letter-spacing:0.364px;left:384px;">add <b>skills</b> (job titles &amp; attributes)</div>
<div class="a" style="left:354.2px;top:251.7px;width:7px;height:7px;border-radius:50%;background:#fff"></div>
<div class="t co" style="top:242px;color:rgba(255,255,255,0.9);font-size:18px;letter-spacing:0px;line-height:24px;height:24px;letter-spacing:0.207px;left:384px;">adjust <b>Start Date</b> &amp; <b>End Date</b> (using</div>
<div class="t co" style="top:265.5px;color:rgba(255,255,255,0.9);font-size:18px;letter-spacing:0px;line-height:24px;height:24px;letter-spacing:0.87px;left:383.3px;">Duration will auto-update End Date)</div>
<div class="a" style="left:354.2px;top:298.9px;width:7px;height:7px;border-radius:50%;background:#fff"></div>
<div class="t co" style="top:289px;color:rgba(255,255,255,0.9);font-size:18px;letter-spacing:0px;line-height:24px;height:24px;letter-spacing:0.376px;left:384px;">enter <b>Pay and Charge Rates</b></div>
<div class="a" style="left:354.2px;top:322.6px;width:7px;height:7px;border-radius:50%;background:#fff"></div>
<div class="t co" style="top:312.8px;color:rgba(255,255,255,0.9);font-size:18px;letter-spacing:0px;line-height:24px;height:24px;letter-spacing:0.57px;left:384px;">check Rate Type and <b>Rate interval</b></div>
<div class="a" style="left:354.2px;top:346.5px;width:7px;height:7px;border-radius:50%;background:#fff"></div>
<div class="t co" style="top:336.5px;color:rgba(255,255,255,0.9);font-size:18px;letter-spacing:0px;line-height:24px;height:24px;letter-spacing:0.553px;left:384px;">add <b>description/advert</b></div>
<div class="t co" style="top:373px;color:rgba(255,255,255,0.9);font-size:18px;letter-spacing:0px;line-height:24px;height:24px;letter-spacing:0.71px;left:332.6px;width:400px;text-align:center;">Click <b>Save</b></div>
</body></html>
